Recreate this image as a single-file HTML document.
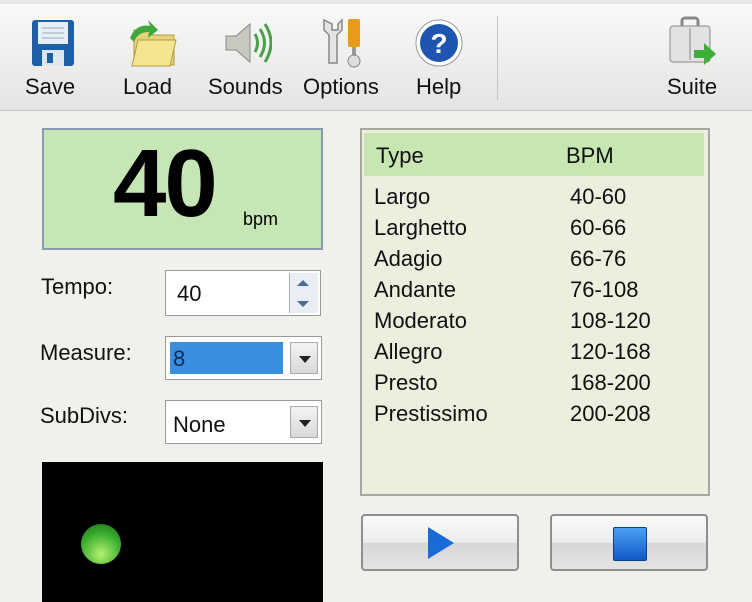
<!DOCTYPE html><html><head><style>
body{margin:0;width:752px;height:600px;overflow:hidden;background:#f0f0ec;font-family:"Liberation Sans",sans-serif;position:relative}
.a{position:absolute}
.tb{left:0;top:0;width:752px;height:110px;background:linear-gradient(#fafafa,#e4e4e2);border-bottom:1px solid #c8c8c8}
.lbl{font-size:22px;color:#111;top:74px}
.t{font-size:22px;color:#111}
.inp{background:#fff;border:1px solid #9a9a9a;box-sizing:border-box}
.dd{position:absolute;right:3px;top:5px;width:28px;bottom:5px;background:linear-gradient(#f4f4f4,#d8d8d8);border:1px solid #aaa;box-sizing:border-box}
.dd:after{content:"";position:absolute;left:8px;top:13px;border:6px solid transparent;border-top:7px solid #222}
.btn{border:2px solid #8e8e8e;border-radius:4px;background:linear-gradient(#fafafa 0%,#ececec 50%,#d6d6d6 51%,#e4e4e4);box-sizing:border-box}
</style></head><body>
<div class="a tb"></div>
<div class="a" style="left:0;top:0;width:752px;height:4px;background:#e8e8e8"></div>
<svg class="a" style="left:30px;top:18px" width="46" height="50"><rect x="2" y="2" width="42" height="46" rx="3" fill="#1f5fa8"/><rect x="8" y="4" width="30" height="22" fill="#e8eef5"/><line x1="12" y1="10" x2="34" y2="10" stroke="#9ab"/><line x1="12" y1="15" x2="34" y2="15" stroke="#9ab"/><line x1="12" y1="20" x2="34" y2="20" stroke="#9ab"/><rect x="12" y="32" width="22" height="16" fill="#dfe6ee"/><rect x="17" y="35" width="6" height="10" fill="#1f5fa8"/></svg>
<svg class="a" style="left:126px;top:18px" width="52" height="50"><path d="M8 12h14l4 5h22v30H8z" fill="#e6d27a" stroke="#b49a3a"/><path d="M12 22h38l-6 26H6z" fill="#f4e690" stroke="#b49a3a"/><path d="M4 20c4-10 12-14 20-12l-2-6 10 10-10 8 1-6c-6 0-12 2-15 10z" fill="#3fa83a"/></svg>
<svg class="a" style="left:222px;top:18px" width="50" height="50"><path d="M4 18h10l14-12v38L14 32H4z" fill="#c8c8c0" stroke="#888"/><path d="M33 16q5 9 0 18M38 11q9 14 0 28M43 6q12 19 0 38" stroke="#4aa04a" stroke-width="3" fill="none"/></svg>
<svg class="a" style="left:318px;top:16px" width="50" height="54"><path d="M6 4v10l5 5v28h8V19l5-5V4l-4 4v6h-6V8z" fill="#e4e4e4" stroke="#888" stroke-width="1.5"/><rect x="30" y="3" width="12" height="28" rx="2" fill="#e89a1a"/><rect x="34" y="31" width="4" height="10" fill="#999"/><circle cx="36" cy="45" r="6" fill="#ddd" stroke="#888"/></svg>
<svg class="a" style="left:414px;top:18px" width="50" height="50"><circle cx="25" cy="25" r="23" fill="#fff" stroke="#999"/><circle cx="25" cy="25" r="19" fill="#1d55b0"/><text x="25" y="35" font-size="28" font-weight="bold" fill="#fff" text-anchor="middle" font-family="Liberation Sans">?</text></svg>
<div class="a" style="left:497px;top:16px;width:1px;height:84px;background:#c4c4c4"></div>
<svg class="a" style="left:666px;top:14px" width="56" height="56"><rect x="16" y="4" width="16" height="10" rx="3" fill="none" stroke="#888" stroke-width="3"/><rect x="4" y="12" width="40" height="36" rx="3" fill="#e2e2e2" stroke="#888"/><line x1="24" y1="14" x2="24" y2="46" stroke="#888"/><path d="M28 36h10v-7l12 11-12 11v-7H28z" fill="#3fae3a"/></svg>
<div class="a lbl" style="left:25px">Save</div>
<div class="a lbl" style="left:123px">Load</div>
<div class="a lbl" style="left:208px">Sounds</div>
<div class="a lbl" style="left:303px">Options</div>
<div class="a lbl" style="left:416px">Help</div>
<div class="a lbl" style="left:667px">Suite</div>
<div class="a" style="left:42px;top:128px;width:281px;height:122px;background:#c6e6b6;border:2px solid #8a9aae;box-sizing:border-box"></div>
<div class="a" style="left:113px;top:132px;font-size:96px;font-weight:bold;color:#000;line-height:104px;letter-spacing:-2px">40</div>
<div class="a" style="left:243px;top:209px;font-size:18px">bpm</div>
<div class="a t" style="left:41px;top:274px">Tempo:</div>
<div class="a t" style="left:40px;top:340px">Measure:</div>
<div class="a t" style="left:40px;top:403px">SubDivs:</div>
<div class="a inp" style="left:165px;top:270px;width:156px;height:46px"><span class="a t" style="left:11px;top:10px">40</span><div class="a" style="right:2px;top:2px;width:28px;height:40px;background:#e8eef4;border-left:1px solid #aab"></div><div class="a" style="right:11px;top:9px;border:6px solid transparent;border-bottom:6px solid #4a6a9a;border-top:0"></div><div class="a" style="right:11px;top:30px;border:6px solid transparent;border-top:6px solid #4a6a9a;border-bottom:0"></div></div>
<div class="a inp" style="left:165px;top:336px;width:157px;height:44px"><div class="a" style="left:4px;top:5px;width:113px;height:32px;background:#3a8ee0"></div><span class="a t" style="left:7px;top:9px;color:#0c2a5a">8</span><div class="dd"></div></div>
<div class="a inp" style="left:165px;top:400px;width:157px;height:44px"><span class="a t" style="left:7px;top:11px">None</span><div class="dd"></div></div>
<div class="a" style="left:42px;top:462px;width:281px;height:140px;background:#000"></div>
<div class="a" style="left:81px;top:524px;width:40px;height:40px;border-radius:50%;background:radial-gradient(circle at 50% 75%,#b8f070,#3cb030 55%,#1a6a18)"></div>
<div class="a" style="left:360px;top:128px;width:350px;height:368px;background:#eeeedf;border:2px solid #a8a8a0;box-sizing:border-box"></div>
<div class="a" style="left:364px;top:133px;width:340px;height:43px;background:#c8e6b2"></div>
<div class="a t" style="left:376px;top:143px">Type</div><div class="a t" style="left:566px;top:143px">BPM</div>
<div class="a t" style="left:374px;top:181px;line-height:31px">Largo<br>Larghetto<br>Adagio<br>Andante<br>Moderato<br>Allegro<br>Presto<br>Prestissimo</div>
<div class="a t" style="left:570px;top:181px;line-height:31px">40-60<br>60-66<br>66-76<br>76-108<br>108-120<br>120-168<br>168-200<br>200-208</div>
<div class="a btn" style="left:361px;top:514px;width:158px;height:57px"></div>
<div class="a btn" style="left:550px;top:514px;width:158px;height:57px"></div>
<div class="a" style="left:428px;top:527px;border-left:26px solid #1a6ad8;border-top:16px solid transparent;border-bottom:16px solid transparent"></div>
<div class="a" style="left:613px;top:527px;width:32px;height:32px;background:linear-gradient(#4aa0f4,#1258c8);border:1px solid #0b3f90;border-radius:2px"></div>
</body></html>
